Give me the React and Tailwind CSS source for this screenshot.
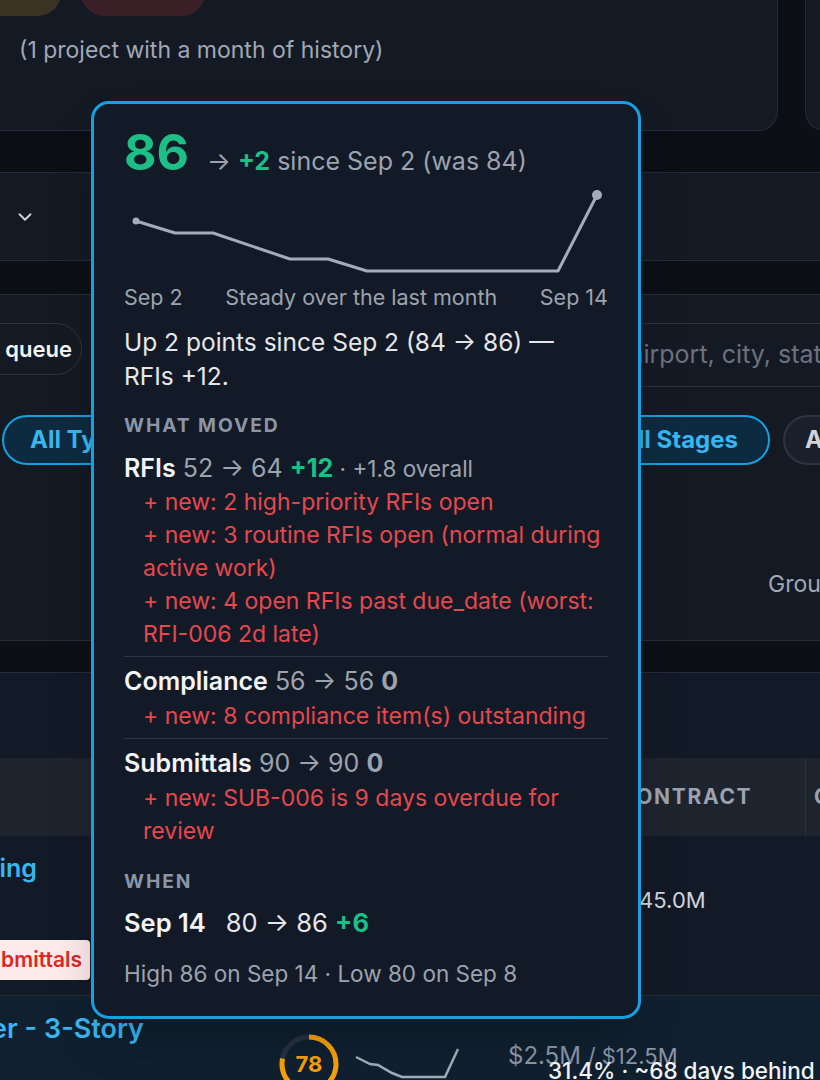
import React from "react";
import { ChevronDown } from "lucide-react";

const chart = [
  [12, 41], [51, 53], [89, 53], [166, 79], [204, 79], [243, 91], [434, 91], [473, 15],
];

const moved = [
  {
    name: "RFIs", from: 52, to: 64, delta: "+12", good: true, extra: "· +1.8 overall",
    items: [
      "+ new: 2 high-priority RFIs open",
      "+ new: 3 routine RFIs open (normal during active work)",
      "+ new: 4 open RFIs past due_date (worst: RFI-006 2d late)",
    ],
  },
  { name: "Compliance", from: 56, to: 56, delta: "0", items: ["+ new: 8 compliance item(s) outstanding"] },
  { name: "Submittals", from: 90, to: 90, delta: "0", items: ["+ new: SUB-006 is 9 days overdue for review"] },
];

const ScorePopover = () => {
  return (
    <div className="absolute left-[91px] top-[101px] w-[550px] rounded-[18px] border-[3px] border-[#179fdf] bg-[#131a27] px-[30px] pt-[23px] pb-[28px] shadow-2xl">
      <div className="flex h-[50px] items-baseline leading-[50px]">
        <span className="text-[50px] font-bold text-[#1cbf86]">86</span>
        <span className="ml-[18px] text-[25px] text-[#9ca3af]">
          → <span className="font-bold text-[#1cbf86]">+2</span> since Sep 2 (was 84)
        </span>
      </div>

      <svg className="mt-[3px] block" width="484" height="103" viewBox="0 0 484 103">
        <polyline
          points={chart.map((p) => p.join(",")).join(" ")}
          fill="none"
          stroke="#a3acba"
          strokeWidth="3"
          strokeLinejoin="round"
          strokeLinecap="round"
        />
        <circle cx="12" cy="41" r="3.5" fill="#a3acba" />
        <circle cx="473" cy="15" r="5" fill="#a3acba" />
      </svg>

      <div className="flex justify-between text-[21.5px] leading-[28px] text-[#9ca3af]">
        <span>Sep 2</span>
        <span>Steady over the last month</span>
        <span>Sep 14</span>
      </div>

      <p className="mt-[14px] text-[24.5px] leading-[34px] text-[#e5e7eb]">
        Up 2 points since Sep 2 (84 → 86) —<br />RFIs +12.
      </p>

      <div className="mt-[19px] text-[19.25px] font-bold uppercase leading-[26px] tracking-[0.1em] text-[#8b95a5]">
        What moved
      </div>

      <div className="mt-[13px]">
        {moved.map((m, i) => (
          <div key={m.name} className={i > 0 ? "mt-[5px] border-t border-[#2f3643] pt-[7px]" : ""}>
            <div className="text-[25px] leading-[34px]">
              <span className="font-semibold text-[#f3f4f6]">{m.name}</span>
              <span className="text-[#9ca3af]"> {m.from} → {m.to} </span>
              <span className={m.good ? "font-bold text-[#1cbf86]" : "font-bold text-[#9ca3af]"}>{m.delta}</span>
              {m.extra && <span className="text-[22.5px] text-[#9ca3af]"> {m.extra}</span>}
            </div>
            <div className={i > 0 ? "mt-[2px]" : ""}>
              {m.items.map((t) => (
                <div key={t} className="pl-[19px] text-[23px] leading-[33px] text-[#e5484d]">
                  {t}
                </div>
              ))}
            </div>
          </div>
        ))}
      </div>

      <div className="mt-[20px] text-[19.25px] font-bold uppercase leading-[26px] tracking-[0.1em] text-[#8b95a5]">
        When
      </div>
      <div className="mt-[12px] text-[25.5px] leading-[34px]">
        <span className="font-semibold text-[#f3f4f6]">Sep 14</span>
        <span className="ml-[20px] text-[#e5e7eb]">80 → 86 </span>
        <span className="font-bold text-[#1cbf86]">+6</span>
      </div>
      <div className="mt-[20px] text-[22.5px] leading-[28px] text-[#9ca3af]">
        High 86 on Sep 14 · Low 80 on Sep 8
      </div>
    </div>
  );
};

export default function App() {
  return (
    <div className="relative h-[1080px] w-[820px] overflow-hidden bg-[#0c1016] font-['Inter',sans-serif]">
      {/* top cards */}
      <div className="flex gap-[27px]">
        <div className="-ml-[20px] h-[131px] w-[798px] shrink-0 rounded-b-[20px] border border-t-0 border-[#262d38] bg-[#141a24] pl-[38px]">
          <div className="-ml-[38px] -mt-[30px] flex gap-[20px]">
            <div className="h-[46px] w-[80px] rounded-full bg-[#3a3322]" />
            <div className="h-[46px] w-[124px] rounded-full bg-[#3a1f27]" />
          </div>
          <p className="mt-[20px] text-[23px] leading-[28px] text-[#a0a8b6]">(1 project with a month of history)</p>
        </div>
        <div className="h-[131px] w-[200px] shrink-0 rounded-bl-[20px] border border-t-0 border-[#262d38] bg-[#141a24]" />
      </div>

      {/* select bar */}
      <div className="mt-[41px] flex h-[89px] items-center border-y border-[#262d38] bg-[#141a24] pl-[14px]">
        <ChevronDown size={22} strokeWidth={2} className="text-[#d1d5db]" />
      </div>

      {/* filters */}
      <div className="mt-[33px] h-[347px] border-y border-[#262d38] bg-[#141a24]">
        <div className="flex items-start pt-[28px]">
          <div className="-ml-[60px] flex h-[52px] w-[142px] shrink-0 items-center justify-end rounded-full border border-[#2d3440] pr-[9px] text-[22px] font-semibold text-[#f3f4f6]">
            queue
          </div>
          <div className="ml-[325px] flex h-[64px] flex-1 items-center whitespace-nowrap rounded-l-[10px] border border-r-0 border-[#2d3440] pl-[16px] text-[25px] text-[#6b7280]">
            Search by name, airport, city, state
          </div>
        </div>
        <div className="mt-[28px] flex w-[950px] items-center">
          <div className="ml-[2px] flex h-[50px] items-center rounded-full border-2 border-[#179fdf] bg-[#0d2b40] px-[26px] text-[24px] font-bold text-[#38b6f0]">
            All Types
          </div>
          <div className="flex-1" />
          <div className="flex h-[50px] items-center rounded-full border-2 border-[#179fdf] bg-[#0d2b40] pr-[30px] pl-[28px] text-[24px] font-bold text-[#38b6f0]">
            All Stages
          </div>
          <div className="ml-[13px] flex h-[50px] w-[167px] items-center rounded-full border-2 border-[#2d3440] bg-[#1a202b] px-[20px] text-[24px] font-bold text-[#d1d5db]">
            All Status
          </div>
        </div>
        <div className="mt-[105px] whitespace-nowrap pl-[768px] text-[23px] leading-[28px] text-[#a0a8b6]">Group by</div>
      </div>

      {/* table */}
      <div className="mt-[31px] h-[420px] border-t border-[#262d38] bg-[#131a27]">
        <div className="mt-[85px] flex h-[78px] items-center bg-[#1e242e] text-[21px] font-bold tracking-[0.08em] text-[#9ca3af]">
          <div className="w-[805px] shrink-0 pl-[619px]">CONTRACT</div>
          <div className="h-full shrink-0 border-l border-[#2a313c] pl-[8px] leading-[78px]">CHANGE</div>
        </div>
        <div className="relative h-[160px] border-b border-[#262d38]">
          <div className="flex w-[37px] justify-end whitespace-nowrap pt-[16px] text-[25px] font-semibold leading-[32px] text-[#38b6f0]">
            Terminal Building
          </div>
          <div className="mt-[1px] pl-[625px] text-[22px] leading-[30px] text-[#d1d5db]">$45.0M</div>
          <div className="mt-[25px] flex w-[90px] justify-end whitespace-nowrap">
            <span className="rounded-[4px] bg-[#fdeaea] px-[8px] text-[21px] font-semibold leading-[40px] text-[#dc2626]">
              Overdue Submittals
            </span>
          </div>
        </div>
        <div className="h-[90px] bg-[#10202f]">
          <div className="flex w-[144px] justify-end whitespace-nowrap pt-[16px] text-[27px] font-semibold leading-[34px] text-[#38b6f0]">
            Concourse Tower - 3-Story
          </div>
          <div className="-mt-[2px] flex items-start">
            <svg className="-mt-[11px] ml-[278px] shrink-0" width="62" height="62" viewBox="0 0 62 62">
              <circle cx="31" cy="31" r="27" fill="none" stroke="#273040" strokeWidth="5" />
              <circle
                cx="31" cy="31" r="27" fill="none" stroke="#f5a00b" strokeWidth="5"
                strokeDasharray={`${2 * Math.PI * 27 * 0.78} ${2 * Math.PI * 27}`}
                transform="rotate(-90 31 31)"
              />
              <text x="31" y="39" textAnchor="middle" fontSize="22" fontWeight="700" fill="#f5a00b" fontFamily="Inter">78</text>
            </svg>
            <svg className="ml-[14px] mt-[3px] shrink-0" width="110" height="36" viewBox="0 0 110 36">
              <polyline points="2,10 16,17 24,18 38,26 48,30 91,30 104,2" fill="none" stroke="#a3acba" strokeWidth="2.5" />
            </svg>
            <div className="ml-[44px] -mt-[2px] whitespace-nowrap">
              <div className="text-[24px] leading-[28px] text-[#8b95a5]">
                $2.5M <span className="text-[22px]">/ $12.5M</span>
              </div>
              <div className="-mt-[13px] ml-[40px] text-[22.5px] font-medium leading-[28px] text-[#f3f4f6]">31.4% · ~68 days behind</div>
            </div>
          </div>
        </div>
      </div>

      <ScorePopover />
    </div>
  );
}
